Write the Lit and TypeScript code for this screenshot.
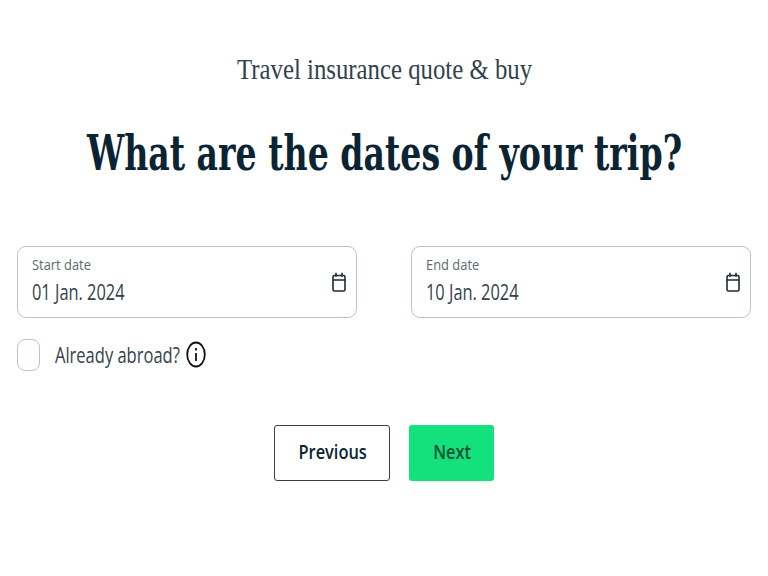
import { LitElement, html, css } from "lit";
import { customElement } from "lit/decorators.js";

const calendar = html`<svg class="cal" viewBox="0 0 14 20" preserveAspectRatio="none" fill="none" stroke="#1c2b33" stroke-width="1.6"><rect x="1" y="3.5" width="12" height="15.5" rx="1.5"></rect><path d="M1 8h12M4 .8v4M10 .8v4"></path></svg>`;

@customElement("app-root")
export class AppRoot extends LitElement {
  static styles = css`
    :host { display: block; width: 768px; height: 576px; background: #fff; overflow: hidden; font-family: "Open Sans", sans-serif; color: #0b2433; }
    .page { display: flex; flex-direction: column; align-items: center; padding-top: 51px; }
    .kicker { font: 400 30px/36px "Liberation Serif", serif; color: #33424c; margin: 0 0 0 1px; white-space: nowrap; transform: scaleX(.826); }
    h1 { font: 700 48px/60px "DejaVu Serif Condensed", "DejaVu Serif", serif; margin: 36px 0 0; color: #0b2433; white-space: nowrap; transform: scaleX(.768); }
    .fields { width: 734px; display: grid; grid-template-columns: 340px 340px; justify-content: space-between; margin-top: 63px; }
    .field { height: 72px; box-sizing: border-box; border: 1px solid #b6c6c8; border-radius: 9px; padding: 0 11px 0 14px; display: flex; justify-content: space-between; align-items: center; }
    .label { font-size: 15px; line-height: 18px; color: #5c6a70; transform: scaleX(.86); transform-origin: left center; white-space: nowrap; }
    .value { font-size: 21px; line-height: 27px; color: #33424c; margin-top: 6px; transform: scaleX(.78); transform-origin: left center; white-space: nowrap; }
    .text { align-self: flex-start; margin-top: 8px; }
    .cal { width: 14px; height: 20px; margin-top: -1px; margin-right: -1px; }
    .abroad { width: 734px; display: flex; align-items: center; margin-top: 20px; height: 33px; }
    .box { width: 23px; height: 32px; box-sizing: border-box; border: 1px solid #b6c6c8; border-radius: 8px; }
    .abroad span { width: 125px; font-size: 21px; color: #33424c; margin-left: 15px; white-space: nowrap; transform: scaleX(.786); transform-origin: left center; }
    .info { width: 20px; height: 27px; margin-left: 6px; }
    .actions { display: flex; gap: 19px; margin-top: 54px; }
    button { height: 56px; border-radius: 3px; font: 600 20px/26px "Open Sans", sans-serif; color: #0b2433; background: #fff; border: 1px solid #34424a; padding: 0 0 2px 1px; }
    button span { display: inline-block; transform: scaleX(.82); }
    .prev { width: 116px; }
    .next { width: 85px; background: #14e07c; border: none; color: #0c5236; }
  `;
  render() {
    return html`<div class="page">
      <p class="kicker">Travel insurance quote &amp; buy</p>
      <h1>What are the dates of your trip?</h1>
      <div class="fields">
        <div class="field"><div class="text"><div class="label">Start date</div><div class="value">01 Jan. 2024</div></div>${calendar}</div>
        <div class="field"><div class="text"><div class="label">End date</div><div class="value">10 Jan. 2024</div></div>${calendar}</div>
      </div>
      <div class="abroad"><div class="box"></div><span>Already abroad?</span>
        <svg class="info" viewBox="0 0 20 27" fill="none" stroke="#111" stroke-width="1.8"><ellipse cx="10" cy="13.5" rx="8.8" ry="12"></ellipse><path d="M10 12v8M10 7v2.4"></path></svg>
      </div>
      <div class="actions"><button class="prev"><span>Previous</span></button><button class="next"><span>Next</span></button></div>
    </div>`;
  }
}
